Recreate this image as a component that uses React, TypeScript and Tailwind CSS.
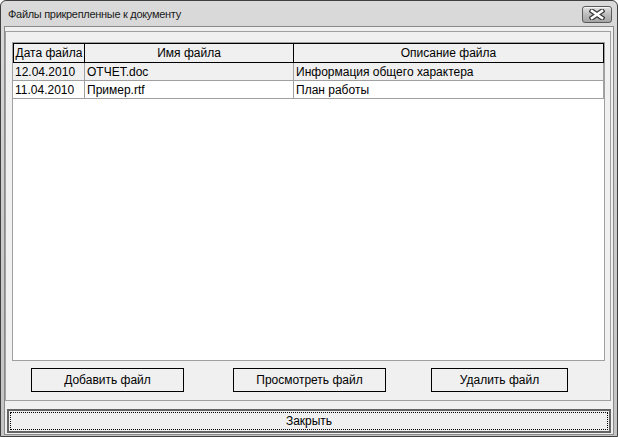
import React from "react";

const font = { fontFamily: '"Liberation Sans", Arial, sans-serif' };

function CloseX() {
  return (
    <svg width="16" height="11" viewBox="0 0 16 11">
      <path d="M3 2 L13 9 M13 2 L3 9" stroke="#3a3a3a" strokeWidth="5" strokeLinecap="square" />
      <path d="M3 2 L13 9 M13 2 L3 9" stroke="#ffffff" strokeWidth="2.6" strokeLinecap="square" />
    </svg>
  );
}

const rows = [
  { date: "12.04.2010", name: "ОТЧЕТ.doc", desc: "Информация общего характера", bg: "bg-[#f0f0f0]" },
  { date: "11.04.2010", name: "Пример.rtf", desc: "План работы", bg: "bg-white" },
];

export default function App() {
  return (
    <div
      className="w-[618px] h-[437px] flex flex-col border border-[#3f3f3f] rounded-t-[6px] overflow-hidden bg-gradient-to-b from-[#dadada] via-[#cbcbcb] to-[#c4c4c4] text-[12px] text-black"
      style={font}
    >
      <div className="h-[25px] shrink-0 flex items-center justify-between pl-[7px] pr-[5px]">
        <span className="text-[11px] tracking-[-0.3px] text-[#1a1a1a] mt-[2px]">Файлы прикрепленные к документу</span>
        <div className="w-[30px] h-[17px] mt-[1px] rounded-[3px] border border-[#5a5a5a] bg-gradient-to-b from-[#e2e2e2] via-[#bcbcbc] to-[#a4a4a4] flex items-center justify-center shadow-[inset_0_1px_0_#f4f4f4]">
          <CloseX />
        </div>
      </div>
      <div className="flex-1 mx-[3px] mb-[1px] border border-[#8a8a8a] bg-[#f0f0f0] flex flex-col">
        <div className="mt-[4px] mr-[2px] h-[370px] border border-[#a0a0a0] flex flex-col">
          <div className="mt-[10px] ml-[6px] mr-[5px] h-[319px] border border-[#a0a0a0] bg-white flex flex-col">
            <div className="h-[20px] flex border border-black bg-[#f0f0f0]">
              <div className="w-[71px] border-r border-black flex items-center justify-center">Дата файла</div>
              <div className="w-[209px] border-r border-black flex items-center justify-center">Имя файла</div>
              <div className="flex-1 flex items-center justify-center">Описание файла</div>
            </div>
            {rows.map((r) => (
              <div key={r.date} className={`h-[18px] flex border-b border-[#a0a0a0] ${r.bg}`}>
                <div className="w-[72px] border-r border-[#a0a0a0] flex items-center pl-[2px]">{r.date}</div>
                <div className="w-[209px] border-r border-[#a0a0a0] flex items-center pl-[2px]">{r.name}</div>
                <div className="flex-1 flex items-center pl-[2px] border-r border-[#a0a0a0]">{r.desc}</div>
              </div>
            ))}
          </div>
          <div className="mt-[7px] h-[24px] flex">
            <div className="ml-[25px] w-[153px] h-[24px] border border-black flex items-center justify-center">Добавить файл</div>
            <div className="ml-[49px] w-[153px] h-[24px] border border-black flex items-center justify-center">Просмотреть файл</div>
            <div className="ml-[45px] w-[137px] h-[24px] border border-black flex items-center justify-center">Удалить файл</div>
          </div>
        </div>
        <div className="mt-[8px] ml-[2px] mr-[2px] h-[24px] border-2 border-[#646464] p-[1px]">
          <div className="w-full h-full border border-dotted border-black flex items-center justify-center">Закрыть</div>
        </div>
      </div>
    </div>
  );
}
